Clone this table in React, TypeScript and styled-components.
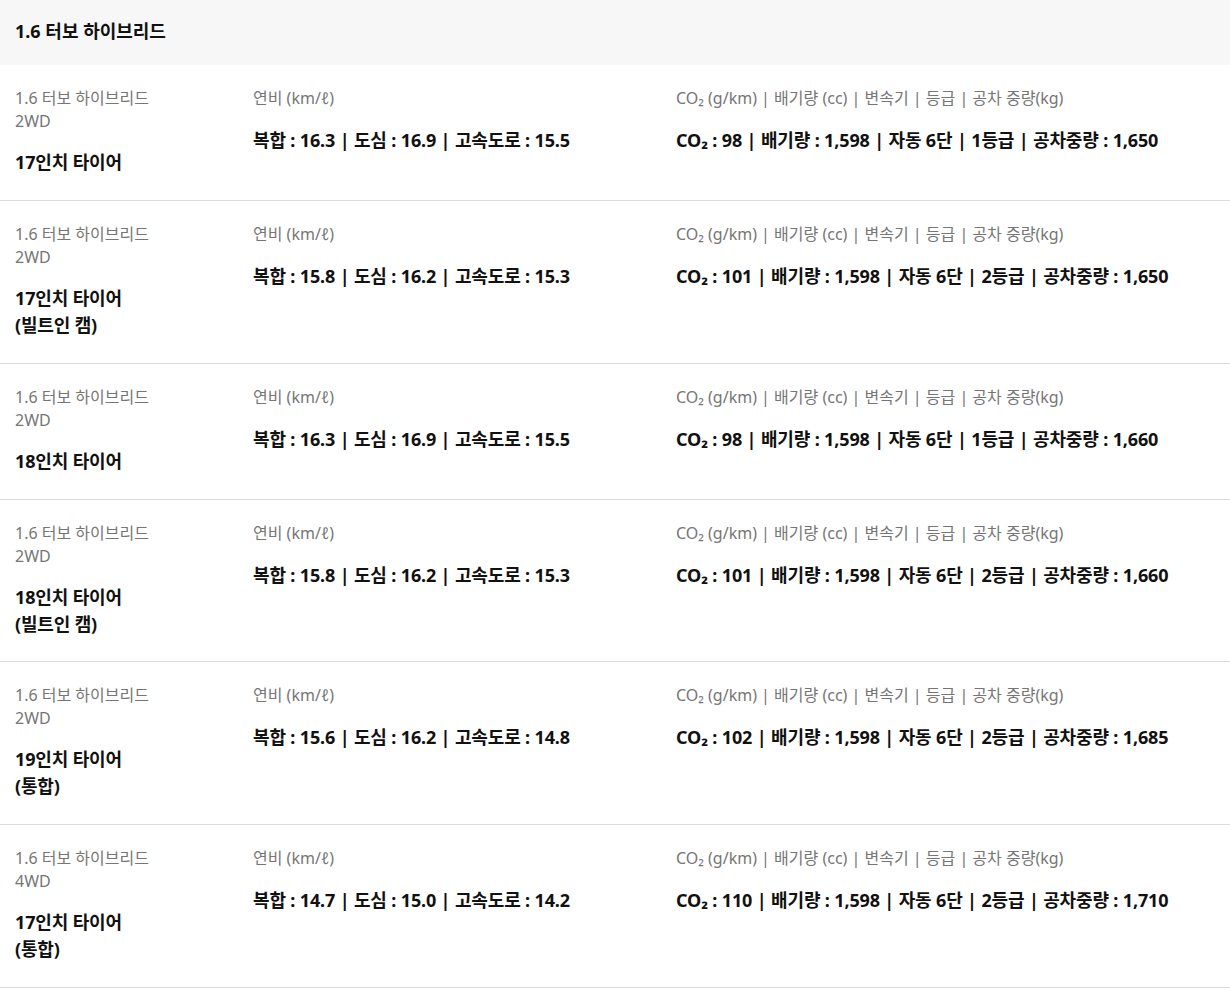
import styled, { createGlobalStyle } from "styled-components";

const GlobalStyle = createGlobalStyle`
    body {
        margin: 0;
        background: #fff;
        font-family: "Noto Sans", "Noto Sans CJK KR", sans-serif;
        color: #111;
    }
`

const Header = styled.div`
    height: 65px;
    box-sizing: border-box;
    background: #f7f7f7;
    display: flex;
    align-items: center;
    padding: 0 15px 5px;
    font-size: 18px;
    font-weight: 700;
    color: #111;
`

const Row = styled.div`
    display: grid;
    grid-template-columns: 238px 423px 1fr;
    padding: 22px 0 24px 15px;
    border-bottom: 1px solid #dcdcdc;
`

const Column = styled.div`
    display: flex;
    flex-direction: column;
`

const Label = styled.div`
    font-size: 16px;
    line-height: 23px;
    color: #767676;
    white-space: pre-line;
`

const Value = styled.div<{ $gap: number }>`
    margin-top: ${p => p.$gap}px;
    font-size: 18px;
    line-height: 26.9px;
    font-weight: 700;
    letter-spacing: -0.15px;
    color: #111;
    white-space: pre-line;
`

type Trim = {
    drive: string
    tire: string
    combined: string
    city: string
    highway: string
    co2: string
    grade: string
    weight: string
}

const trims: Trim[] = [
    { drive: "2WD", tire: "17인치 타이어", combined: "16.3", city: "16.9", highway: "15.5", co2: "98", grade: "1등급", weight: "1,650" },
    { drive: "2WD", tire: "17인치 타이어\n(빌트인 캠)", combined: "15.8", city: "16.2", highway: "15.3", co2: "101", grade: "2등급", weight: "1,650" },
    { drive: "2WD", tire: "18인치 타이어", combined: "16.3", city: "16.9", highway: "15.5", co2: "98", grade: "1등급", weight: "1,660" },
    { drive: "2WD", tire: "18인치 타이어\n(빌트인 캠)", combined: "15.8", city: "16.2", highway: "15.3", co2: "101", grade: "2등급", weight: "1,660" },
    { drive: "2WD", tire: "19인치 타이어\n(통합)", combined: "15.6", city: "16.2", highway: "14.8", co2: "102", grade: "2등급", weight: "1,685" },
    { drive: "4WD", tire: "17인치 타이어\n(통합)", combined: "14.7", city: "15.0", highway: "14.2", co2: "110", grade: "2등급", weight: "1,710" },
]

export default function App() {
    return (
        <>
            <GlobalStyle />
            <Header>1.6 터보 하이브리드</Header>
            {trims.map((t, i) => (
                <Row key={i}>
                    <Column>
                        <Label>{`1.6 터보 하이브리드\n${t.drive}`}</Label>
                        <Value $gap={16}>{t.tire}</Value>
                    </Column>
                    <Column>
                        <Label>연비 (km/ℓ)</Label>
                        <Value $gap={17}>{`복합 : ${t.combined} | 도심 : ${t.city} | 고속도로 : ${t.highway}`}</Value>
                    </Column>
                    <Column>
                        <Label>CO₂ (g/km) | 배기량 (cc) | 변속기 | 등급 | 공차 중량(kg)</Label>
                        <Value $gap={17}>{`CO₂ : ${t.co2} | 배기량 : 1,598 | 자동 6단 | ${t.grade} | 공차중량 : ${t.weight}`}</Value>
                    </Column>
                </Row>
            ))}
        </>
    )
}
